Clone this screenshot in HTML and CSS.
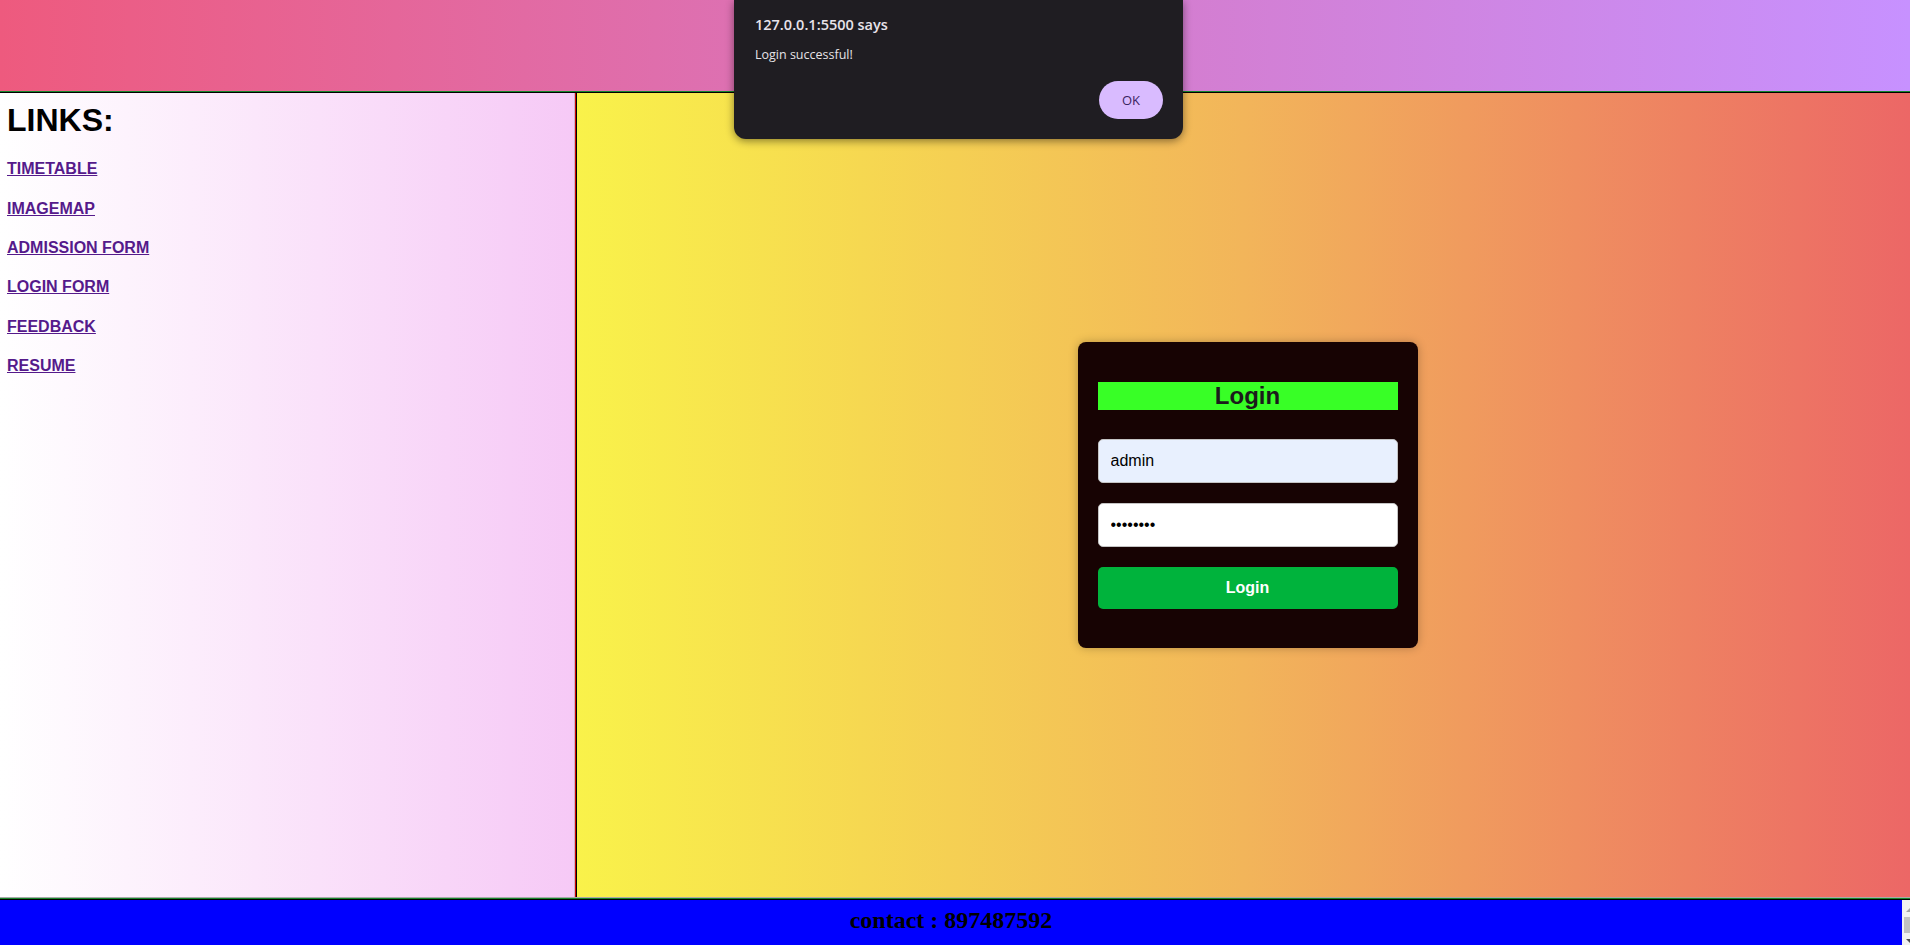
FILE: index.html
```html
<!DOCTYPE html>
<html lang="en">
<head>
<meta charset="utf-8">
<title>Login</title>
<link rel="stylesheet" href="styles.css">
</head>
<body>
<div class="page">
  <header class="top"></header>
  <div class="middle">
    <nav class="links">
      <h1 class="links-title">LINKS:</h1>
      <h4 class="link-item"><a href="#">TIMETABLE</a></h4>
      <h4 class="link-item"><a href="#">IMAGEMAP</a></h4>
      <h4 class="link-item"><a href="#">ADMISSION FORM</a></h4>
      <h4 class="link-item"><a href="#">LOGIN FORM</a></h4>
      <h4 class="link-item"><a href="#">FEEDBACK</a></h4>
      <h4 class="link-item"><a href="#">RESUME</a></h4>
    </nav>
    <main class="main">
      <form class="card" onsubmit="return false">
        <h2 class="card-title">Login</h2>
        <input class="field field-autofill" type="text" value="admin">
        <input class="field" type="password" value="password">
        <button class="btn" type="submit">Login</button>
      </form>
    </main>
  </div>
  <footer class="foot">
    <div class="foot-content">
      <h2 class="contact">contact : 897487592</h2>
    </div>
    <div class="scrollbar">
      <div class="sb-inner">
        <span class="sb-up"></span>
        <span class="sb-thumb"></span>
        <span class="sb-down"></span>
      </div>
    </div>
  </footer>

  <div class="dialog">
    <div class="dialog-title">127.0.0.1:5500 says</div>
    <div class="dialog-msg">Login successful!</div>
    <div class="dialog-actions">
      <button class="dialog-ok" type="button">OK</button>
    </div>
  </div>
</div>
</body>
</html>
```

FILE: styles.css
```css
html, body {
  margin: 0;
  padding: 0;
  height: 100%;
  overflow: hidden;
}

.page {
  position: relative;
  height: 945px;
  display: flex;
  flex-direction: column;
  font-family: "Liberation Sans", Arial, sans-serif;
}

.top {
  flex: 0 0 91px;
  background: linear-gradient(to right, #ee5a7e, #d67ac8 55%, #c791ff);
  border-bottom: 1px solid #17852c;
}

.middle {
  flex: 1 1 auto;
  display: flex;
  border-top: 1px solid #000;
  border-bottom: 1px solid #a9a9a9;
  min-height: 0;
}

.links {
  flex: 0 0 575px;
  box-sizing: border-box;
  padding: 9px 7px;
  background: linear-gradient(to right, #ffffff, #f6c9f6);
  border-right: 1px solid #c9b3c9;
}

.links-title {
  margin: 0 0 21.44px 0;
  font-size: 32px;
  font-weight: bold;
  color: #000;
}

.link-item {
  margin: 21.28px 0;
  font-size: 16px;
  font-weight: bold;
}

.link-item a {
  color: #551a8b;
  text-decoration: underline;
}

.main {
  flex: 1 1 auto;
  display: flex;
  align-items: center;
  justify-content: center;
  padding-left: 9px;
  background: linear-gradient(to right, #f9f24a, #f2b55a 50%, #ec6766);
  border-left: 1px solid #d00000;
  box-shadow: inset 1px 0 0 #000;
}

.card {
  width: 340px;
  box-sizing: border-box;
  padding: 40px 20px 39px;
  display: flex;
  flex-direction: column;
  background: #170303;
  border-radius: 8px;
  box-shadow: 0 0 10px rgba(0, 0, 0, 0.25);
}

.card-title {
  margin: 0 0 29px;
  height: 28px;
  line-height: 28px;
  font-size: 24px;
  font-weight: bold;
  text-align: center;
  color: #1b1b1b;
  background: #38ff26;
}

.field {
  box-sizing: border-box;
  height: 44px;
  width: 100%;
  margin: 0 0 20px;
  padding: 0 12px;
  border: 1px solid #c4c4c4;
  border-radius: 5px;
  background: #fff;
  font-family: "Liberation Sans", Arial, sans-serif;
  font-size: 16px;
  color: #000;
}

.field-autofill {
  background: #e8f0fe;
}

.btn {
  height: 42px;
  width: 100%;
  border: 0;
  border-radius: 5px;
  background: #00b33c;
  color: #fff;
  font-family: "Liberation Sans", Arial, sans-serif;
  font-size: 16px;
  font-weight: bold;
  cursor: pointer;
}

.foot {
  flex: 0 0 47px;
  box-sizing: border-box;
  display: flex;
  background: #0000ff;
  border-top: 1px solid #17852c;
  box-shadow: inset 0 1px 0 #000;
  overflow: hidden;
}

.foot-content {
  flex: 1 1 auto;
  padding-top: 8px;
  text-align: center;
}

.contact {
  margin: 0;
  font-family: "Liberation Serif", "Times New Roman", serif;
  font-size: 24px;
  font-weight: bold;
  color: #000;
}

.scrollbar {
  flex: 0 0 8px;
  overflow: hidden;
  margin-top: 1px;
  background: #f1f1f1;
}

.sb-inner {
  position: relative;
  width: 15px;
  height: 100%;
}

.sb-up {
  position: absolute;
  top: 8px;
  left: 4px;
  width: 0;
  height: 0;
  border-left: 4px solid transparent;
  border-right: 4px solid transparent;
  border-bottom: 4px solid #a3a3a3;
}

.sb-thumb {
  position: absolute;
  top: 17px;
  left: 2px;
  width: 11px;
  height: 16px;
  background: #c1c1c1;
}

.sb-down {
  position: absolute;
  top: 39px;
  left: 4px;
  width: 0;
  height: 0;
  border-left: 4px solid transparent;
  border-right: 4px solid transparent;
  border-top: 4px solid #505050;
}

.dialog {
  position: absolute;
  top: 0;
  left: 734px;
  width: 449px;
  box-sizing: border-box;
  padding: 15px 20px 20px 21px;
  background: #1f1d22;
  border-radius: 0 0 12px 12px;
  box-shadow: 0 2px 8px rgba(0, 0, 0, 0.45);
  font-family: "Open Sans", "Noto Sans", sans-serif;
}

.dialog-title {
  font-size: 14.5px;
  line-height: 20px;
  font-weight: 600;
  color: #e8e3ea;
}

.dialog-msg {
  margin-top: 11px;
  font-size: 12.5px;
  line-height: 18px;
  color: #e6e3e6;
}

.dialog-actions {
  margin-top: 17px;
  display: flex;
  justify-content: flex-end;
}

.dialog-ok {
  width: 64px;
  height: 38px;
  border: 0;
  border-radius: 19px;
  background: #d9bbff;
  color: #3a2461;
  font-family: "Open Sans", "Noto Sans", sans-serif;
  font-size: 13px;
}
```
